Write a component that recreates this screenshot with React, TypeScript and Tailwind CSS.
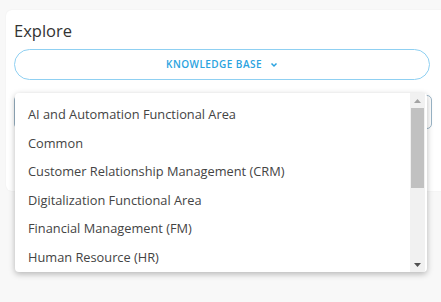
import React from 'react';

const areas = [
  'AI and Automation Functional Area',
  'Common',
  'Customer Relationship Management (CRM)',
  'Digitalization Functional Area',
  'Financial Management (FM)',
  'Human Resource (HR)',
];

export default function App() {
  return (
    <div className="h-[302px] w-[441px] overflow-hidden bg-[#f8f8f8] pl-[6px] pt-[10px] font-['Open_Sans',sans-serif]">
      {/* Explore card */}
      <div className="relative h-[181px] w-[450px] rounded-l-[6px] bg-white pl-2 pr-[17px] pt-[9px] shadow-[0_0_2px_rgba(0,0,0,0.06)]">
        <h1 className="text-[16.5px] leading-[24px] text-[#333]">Explore</h1>

        <button className="mt-[6px] flex h-[31px] w-[416px] items-center justify-center gap-[8px] rounded-full border border-[#8fd0f2] text-[10px] font-semibold tracking-[0.45px] text-[#2aa3e0]">
          KNOWLEDGE BASE
          <svg width="8" height="6" viewBox="0 0 8 6" fill="none">
            <path d="M1.5 1.5 4 4l2.5-2.5" stroke="#2aa3e0" strokeWidth="1.5" />
          </svg>
        </button>

        {/* select underneath the open list */}
        <div className="mt-[15px] h-[34px] w-[418px] rounded-[5px] border border-[#9ab4c6]" />

        {/* open list */}
        <div className="absolute left-[9px] top-[83px] flex h-[179px] w-[412px] rounded-[4px] bg-white shadow-[0_2px_6px_rgba(0,0,0,0.28)]">
          <ul className="flex-1 pt-[7px]">
            {areas.map((a) => (
              <li key={a} className="h-[28.6px] pl-[13px] text-[12.8px] leading-[28.6px] text-[#444]">
                {a}
              </li>
            ))}
          </ul>
          <div className="mr-[2px] flex w-[15px] flex-col bg-[#f1f1f1]">
            <div className="flex h-[15px] items-center justify-center">
              <svg width="7" height="4" viewBox="0 0 7 4"><path d="M0 4 3.5 0 7 4z" fill="#a3a3a3" /></svg>
            </div>
            <div className="mx-[1px] h-[80px] bg-[#c1c1c1]" />
            <div className="flex-1" />
            <div className="flex h-[15px] items-center justify-center">
              <svg width="7" height="4" viewBox="0 0 7 4"><path d="M0 0h7L3.5 4z" fill="#505050" /></svg>
            </div>
          </div>
        </div>
      </div>
    </div>
  );
}
